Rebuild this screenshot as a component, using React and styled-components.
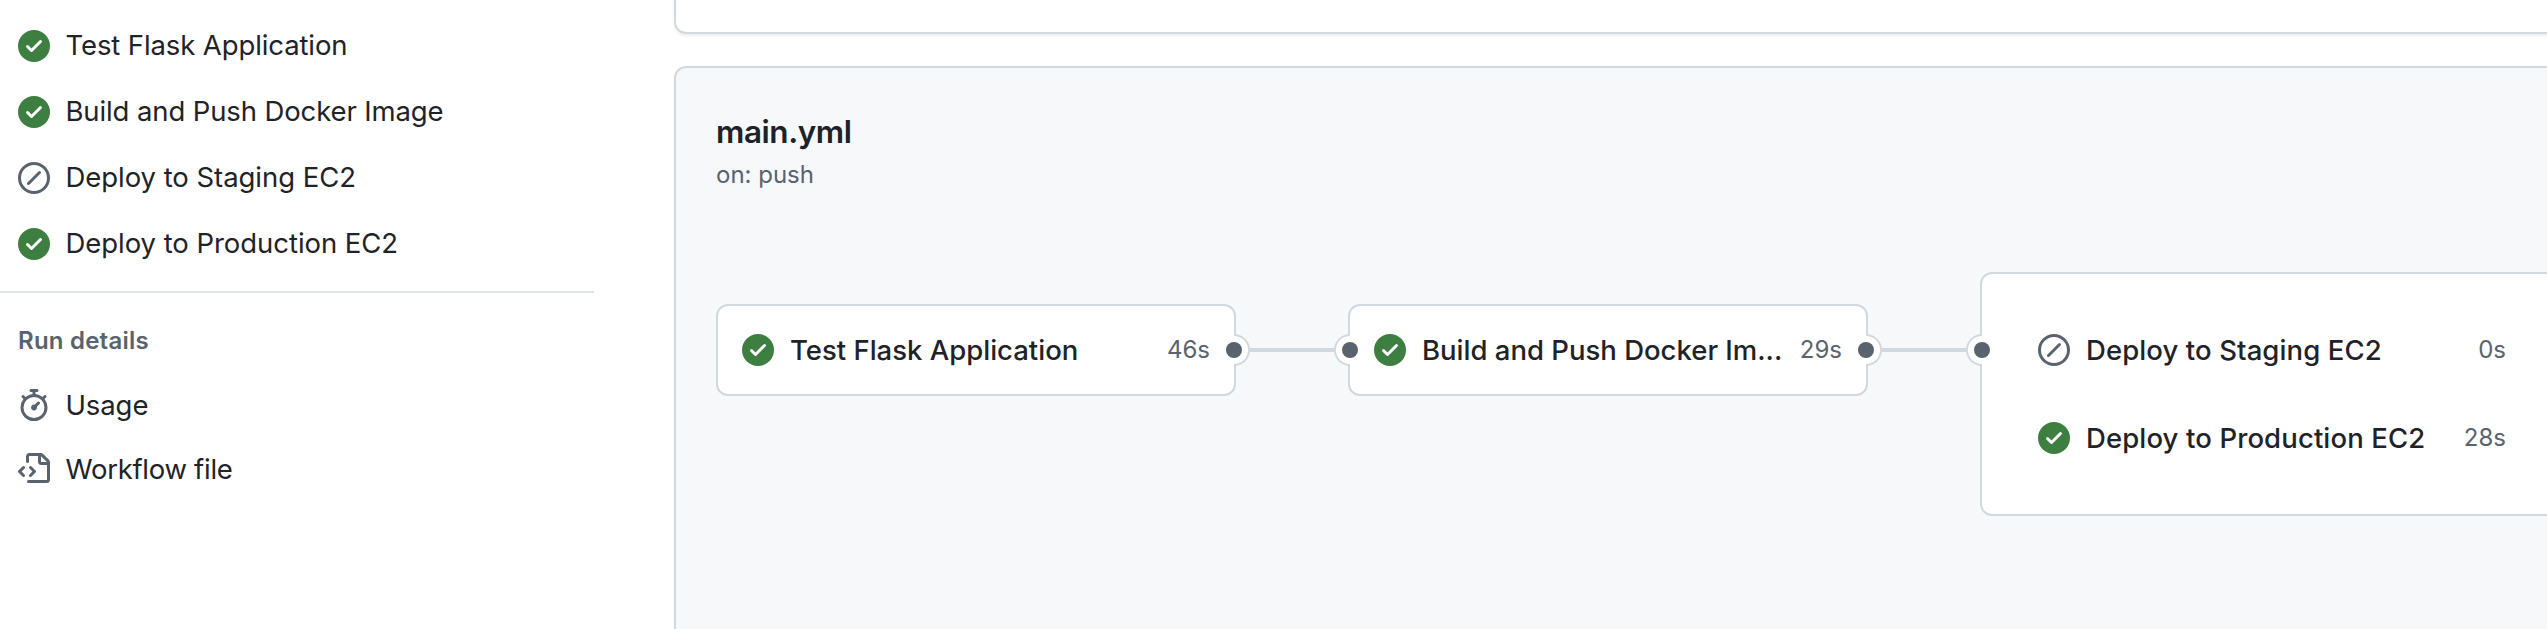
import React from "react";
import styled, { createGlobalStyle, css } from "styled-components";

const GlobalStyle = createGlobalStyle`
  *, *::before, *::after { box-sizing: border-box; }
  html, body { margin: 0; background: #ffffff; }
  body {
    overflow: hidden;
    color: #1f2328;
    font-family: Inter, "Liberation Sans", sans-serif;
    font-size: 27.5px;
  }
`;

const Page = styled.div`
  display: flex;
  width: 100%;
  height: 629px;
  overflow: hidden;
`;

const Sidebar = styled.nav`
  flex: none;
  width: 594px;
  padding-top: 13px;
`;

const NavList = styled.ul`
  margin: 0;
  padding: 0;
  list-style: none;
`;

const NavItem = styled.li`
  display: flex;
  align-items: center;
  gap: 15.5px;
  height: ${(p) => (p.$compact ? 64 : 66)}px;
  padding-left: 18px;
`;

const NavLabel = styled.span`
  line-height: 40px;
  white-space: nowrap;
  letter-spacing: ${(p) => p.$tracking || 0}px;
  ${(p) => p.$raised && css`padding-bottom: 2px;`}
`;

const Divider = styled.hr`
  height: 2px;
  margin: 14px 0 32px;
  border: 0;
  background: #dfe4e9;
`;

const SectionTitle = styled.h3`
  margin: 0 0 16px;
  padding-left: 18px;
  color: #59636e;
  font-size: 24px;
  font-weight: 600;
  line-height: 32px;
  letter-spacing: 0.22px;
`;

const Icon = styled.svg`
  flex: none;
  display: block;
  width: 32px;
  height: 32px;
  fill: ${(p) => p.$color};
`;

const Main = styled.main`
  flex: none;
  display: flex;
  flex-direction: column;
  gap: 32px;
  width: 1960px;
  margin-left: 80px;
`;

const SummaryCard = styled.section`
  height: 34px;
  border: 2px solid #d1d9e0;
  border-top: 0;
  border-radius: 0 0 12px 12px;
  background: #ffffff;
  box-shadow: 0 2px 2px rgba(31, 35, 40, 0.04), 0 2px 4px rgba(31, 35, 40, 0.03);
`;

const WorkflowPanel = styled.section`
  flex: 1;
  padding: 43px 0 0 40px;
  border: 2px solid #d1d9e0;
  border-bottom: 0;
  border-radius: 12px 12px 0 0;
  background: #f6f8fa;
  box-shadow: 0 2px 2px rgba(31, 35, 40, 0.04), 0 2px 4px rgba(31, 35, 40, 0.03);
`;

const WorkflowName = styled.h2`
  margin: 0;
  font-size: 31.5px;
  font-weight: 600;
  line-height: 42px;
  letter-spacing: -0.45px;
`;

const Trigger = styled.p`
  margin: 3px 0 78px;
  color: #59636e;
  font-size: 24px;
  line-height: 38px;
`;

const Graph = styled.div`
  display: flex;
  align-items: flex-start;
`;

const frame = css`
  position: relative;
  flex: none;
  border: 2px solid #d1d9e0;
  border-radius: 12px;
  background: #ffffff;
`;

const JobCard = styled.div`
  ${frame}
  width: 520px;
  height: 92px;
  margin-top: 32px;
`;

const JobGroup = styled.div`
  ${frame}
  width: 584px;
  padding: 32px 30px;
`;

const JobRow = styled.div`
  display: flex;
  align-items: center;
  gap: 16px;
  height: 88px;
  padding: 0 ${(p) => (p.$grouped ? 26 : 24)}px;
`;

const JobName = styled.span`
  flex: 1;
  font-weight: 500;
  line-height: 40px;
  white-space: nowrap;
  letter-spacing: ${(p) => p.$tracking || 0}px;
`;

const Duration = styled.span`
  color: #59636e;
  font-size: 24px;
  line-height: 36px;
`;

const Connector = styled.div`
  flex: none;
  width: 84px;
  height: 4px;
  margin: 76px 14px 0;
  background: #d1d9e0;
`;

const Port = styled.span`
  position: absolute;
  top: ${(p) => (p.$inGroup ? 60 : 28)}px;
  width: 16px;
  height: 32px;
  border: 2px solid #d1d9e0;
  background: #ffffff;
  ${(p) =>
    p.$side === "left"
      ? css`
          left: -16px;
          border-right: 0;
          border-radius: 16px 0 0 16px;
        `
      : css`
          right: -16px;
          border-left: 0;
          border-radius: 0 16px 16px 0;
        `}

  &::after {
    content: "";
    position: absolute;
    top: 6px;
    ${(p) => (p.$side === "left" ? "right" : "left")}: -8px;
    width: 16px;
    height: 16px;
    border-radius: 50%;
    background: #59636e;
  }
`;

const paths = {
  success:
    "M8 16A8 8 0 1 1 8 0a8 8 0 0 1 0 16Zm3.78-9.72a.751.751 0 0 0-.018-1.042.751.751 0 0 0-1.042-.018L6.75 9.19 5.28 7.72a.751.751 0 0 0-1.042.018.751.751 0 0 0-.018 1.042l2 2a.75.75 0 0 0 1.06 0Z",
  skipped:
    "M8 0a8 8 0 1 1 0 16A8 8 0 0 1 8 0ZM1.5 8a6.5 6.5 0 1 0 13 0 6.5 6.5 0 0 0-13 0Zm9.78-2.22-5.5 5.5a.749.749 0 0 1-1.275-.326.749.749 0 0 1 .215-.734l5.5-5.5a.751.751 0 0 1 1.042.018.751.751 0 0 1 .018 1.042Z",
  stopwatch:
    "M5.75.75A.75.75 0 0 1 6.5 0h3a.75.75 0 0 1 0 1.5h-.75v1l-.001.041a6.724 6.724 0 0 1 3.464 1.435l.007-.006.75-.75a.749.749 0 0 1 1.275.326.749.749 0 0 1-.215.734l-.75.75-.006.007a6.75 6.75 0 1 1-10.548 0L2.72 5.03l-.75-.75a.751.751 0 0 1 .018-1.042.751.751 0 0 1 1.042-.018l.75.75.007.006A6.72 6.72 0 0 1 7.25 2.541V1.5H6.5a.75.75 0 0 1-.75-.75ZM8 14.5a5.25 5.25 0 1 0-.001-10.501A5.25 5.25 0 0 0 8 14.5Zm.389-6.7 1.33-1.33a.75.75 0 1 1 1.061 1.06L9.45 8.861A1.503 1.503 0 0 1 8 10.75a1.499 1.499 0 1 1 .389-2.95Z",
  fileCode:
    "M4 1.75C4 .784 4.784 0 5.75 0h5.586c.464 0 .909.184 1.237.513l2.914 2.914c.329.328.513.773.513 1.237v8.586A1.75 1.75 0 0 1 14.25 15h-9a.75.75 0 0 1 0-1.5h9a.25.25 0 0 0 .25-.25V6h-2.75A1.75 1.75 0 0 1 10 4.25V1.5H5.75a.25.25 0 0 0-.25.25v2.5a.75.75 0 0 1-1.5 0Zm1.72 4.97a.75.75 0 0 1 1.06 0l2 2a.75.75 0 0 1 0 1.06l-2 2a.749.749 0 0 1-1.275-.326.749.749 0 0 1 .215-.734l1.47-1.47-1.47-1.47a.75.75 0 0 1 0-1.06ZM3.28 7.78 1.81 9.25l1.47 1.47a.751.751 0 0 1-.018 1.042.751.751 0 0 1-1.042.018l-2-2a.75.75 0 0 1 0-1.06l2-2a.751.751 0 0 1 1.042.018.751.751 0 0 1 .018 1.042Zm8.22-6.218V4.25c0 .138.112.25.25.25h2.688l-.011-.013-2.914-2.914-.013-.011Z",
};

function Glyph({ name }) {
  return (
    <Icon
      viewBox="0 0 16 16"
      aria-hidden="true"
      $color={name === "success" ? "#3d7f40" : "#59636e"}
    >
      <path d={paths[name]} />
    </Icon>
  );
}

const jobs = [
  { name: "Test Flask Application", icon: "success", tracking: -0.11 },
  { name: "Build and Push Docker Image", icon: "success", tracking: -0.12 },
  { name: "Deploy to Staging EC2", icon: "skipped", tracking: -0.05 },
  { name: "Deploy to Production EC2", icon: "success", tracking: -0.05 },
];

const details = [
  { name: "Usage", icon: "stopwatch", tracking: -0.1 },
  { name: "Workflow file", icon: "fileCode", tracking: -0.28 },
];

function Job({ icon, name, time, tracking, grouped }) {
  return (
    <JobRow $grouped={grouped}>
      <Glyph name={icon} />
      <JobName $tracking={tracking}>{name}</JobName>
      <Duration>{time}</Duration>
    </JobRow>
  );
}

export default function App() {
  return (
    <>
      <GlobalStyle />
      <Page>
        <Sidebar>
          <NavList>
            {jobs.map((job) => (
              <NavItem key={job.name}>
                <Glyph name={job.icon} />
                <NavLabel $raised $tracking={job.tracking}>
                  {job.name}
                </NavLabel>
              </NavItem>
            ))}
          </NavList>
          <Divider />
          <SectionTitle>Run details</SectionTitle>
          <NavList>
            {details.map((item) => (
              <NavItem key={item.name} $compact>
                <Glyph name={item.icon} />
                <NavLabel $tracking={item.tracking}>{item.name}</NavLabel>
              </NavItem>
            ))}
          </NavList>
        </Sidebar>
        <Main>
          <SummaryCard />
          <WorkflowPanel>
            <WorkflowName>main.yml</WorkflowName>
            <Trigger>on: push</Trigger>
            <Graph>
              <JobCard>
                <Job icon="success" name="Test Flask Application" time="46s" />
                <Port $side="right" />
              </JobCard>
              <Connector />
              <JobCard>
                <Port $side="left" />
                <Job icon="success" name="Build and Push Docker Im..." time="29s" />
                <Port $side="right" />
              </JobCard>
              <Connector />
              <JobGroup>
                <Port $side="left" $inGroup />
                <Job grouped icon="skipped" name="Deploy to Staging EC2" time="0s" tracking={0.1} />
                <Job grouped icon="success" name="Deploy to Production EC2" time="28s" tracking={0.12} />
              </JobGroup>
            </Graph>
          </WorkflowPanel>
        </Main>
      </Page>
    </>
  );
}
